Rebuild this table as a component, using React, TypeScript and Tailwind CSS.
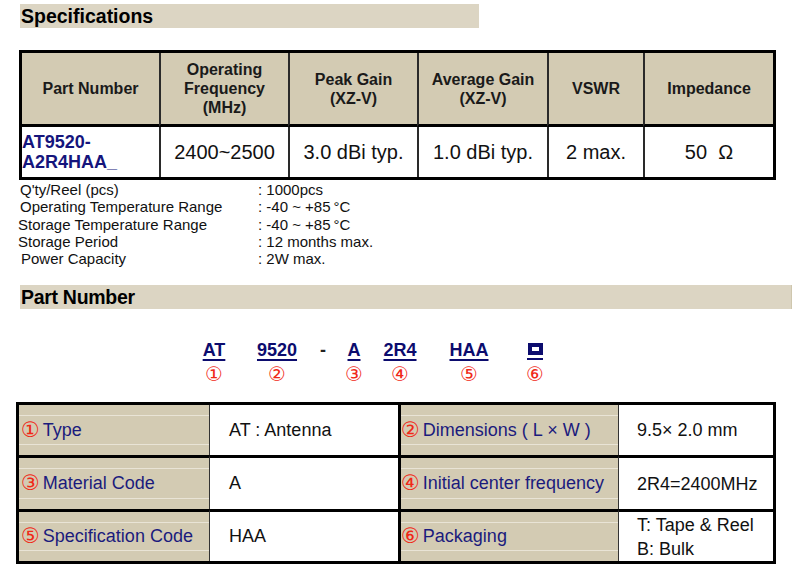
import React from 'react';

const specHeaders = [
  ['Part Number'],
  ['Operating', 'Frequency', '(MHz)'],
  ['Peak Gain', '(XZ-V)'],
  ['Average Gain', '(XZ-V)'],
  ['VSWR'],
  ['Impedance'],
];

const specValues = ['2400~2500', '3.0 dBi typ.', '1.0 dBi typ.', '2 max.', '50\u00a0\u00a0Ω'];

const details = [
  { label: "Q'ty/Reel (pcs)", value: ': 1000pcs', indent: 'pl-[20px]' },
  { label: 'Operating Temperature Range', value: ': -40 ~ +85\u2009°C', indent: 'pl-[20px]' },
  { label: 'Storage Temperature Range', value: ': -40 ~ +85\u2009°C', indent: 'pl-[18px]' },
  { label: 'Storage Period', value: ': 12 months max.', indent: 'pl-[18px]' },
  { label: 'Power Capacity', value: ': 2W max.', indent: 'pl-[21px]' },
];

const codeParts = [
  { code: 'AT', num: '①', left: 'ml-[199px]' },
  { code: '9520', num: '②', left: 'ml-[33px]' },
  { code: '-', num: '', left: 'ml-[16px]' },
  { code: 'A', num: '③', left: 'ml-[1px]' },
  { code: '2R4', num: '④', left: 'ml-[16px]' },
  { code: 'HAA', num: '⑤', left: 'ml-[39px]' },
  { code: 'box', num: '⑥', left: 'ml-[36px]' },
];

const rows = [
  { n1: '①', l1: 'Type', v1: ['AT : Antenna'], n2: '②', l2: 'Dimensions ( L × W )', v2: ['9.5× 2.0 mm'], h: 'h-[50px]' },
  { n1: '③', l1: 'Material Code', v1: ['A'], n2: '④', l2: 'Initial center frequency', v2: ['2R4=2400MHz'], h: 'h-[54px]' },
  { n1: '⑤', l1: 'Specification Code', v1: ['HAA'], n2: '⑥', l2: 'Packaging', v2: ['T: Tape & Reel', 'B: Bulk'], h: 'h-[52px]' },
];

const labelCell =
  'bg-[#d3cbb3] shadow-[inset_0_10px_0_#d3cbb3,inset_0_11px_0_#e9e4d6,inset_0_-10px_0_#d3cbb3,inset_0_-11px_0_#e9e4d6] flex items-center text-[18px] text-[#1b1b7d]';

function Circled({ n, size }: { n: string; size: string }) {
  return (
    <span className={`font-['DejaVu_Sans',sans-serif] text-[#f02818] leading-none ${size}`}>{n}</span>
  );
}

export default function App() {
  return (
    <div className="w-[800px] h-[579px] bg-white font-['Liberation_Sans',Arial,sans-serif] text-[#111] pt-[4px] overflow-hidden">
      {/* Specifications */}
      <div className="ml-[20px] w-[459px] h-[24px] bg-[#dcd5c3] text-[19.5px] font-bold leading-[24px] pl-[1px] text-black">
        Specifications
      </div>

      <div className="ml-[19px] mt-[22px] w-[757px] border-[3px] border-black grid grid-cols-[137px_129px_129px_130px_96px_130px]">
        {specHeaders.map((lines, i) => (
          <div
            key={i}
            className={`h-[74px] bg-[#d3cbb3] flex flex-col items-center justify-center text-[16px] leading-[19px] font-bold text-[#1a1a1a] border-b-[3px] border-black ${
              i > 0 ? 'border-l-2 border-l-[#2a2a2a]' : ''
            }`}
          >
            {lines.map((l) => (
              <span key={l}>{l}</span>
            ))}
          </div>
        ))}
        <div className="h-[50px] flex flex-col justify-center text-[18px] leading-[20px] font-bold text-[#15157c]">
          <span>AT9520-</span>
          <span>A2R4HAA_</span>
        </div>
        {specValues.map((v) => (
          <div key={v} className="h-[50px] border-l-2 border-l-[#2a2a2a] flex items-center justify-center text-[20px] text-[#111]">
            {v}
          </div>
        ))}
      </div>

      <div className="mt-[1px] text-[15px] leading-[17.3px] text-[#111]">
        {details.map((d) => (
          <div key={d.label} className="flex">
            <span className={`w-[258px] ${d.indent}`}>{d.label}</span>
            <span>{d.value}</span>
          </div>
        ))}
      </div>

      {/* Part Number */}
      <div className="ml-[20px] mt-[18px] w-[772px] h-[24px] bg-[#dcd5c3] border-r border-[#cfc7ae] text-[19.5px] font-bold leading-[24px] pl-[1px] tracking-[-0.3px] text-black">
        Part Number
      </div>

      <div className="mt-[31px] flex">
        {codeParts.map((p) => (
          <div key={p.code} className={`w-[30px] flex flex-col items-center ${p.left}`}>
            {p.code === 'box' ? (
              <div className="h-[20px] flex flex-col items-center pt-[3px]">
                <div className="w-[15px] h-[12px] border-[4px] border-[#0c0c6e] bg-white" />
                <div className="w-[16px] h-[2px] bg-[#0c0c6e] mt-[3px]" />
              </div>
            ) : p.code === '-' ? (
              <span className="h-[20px] text-[18px] leading-[20px] font-bold text-[#222]">-</span>
            ) : (
              <span className="h-[20px] whitespace-nowrap text-[18px] leading-[20px] font-bold text-[#0c0c6e] underline decoration-2 underline-offset-[3px]">
                {p.code}
              </span>
            )}
            <span className="mt-[6px] h-[16px] flex items-center">
              {p.num && <Circled n={p.num} size="text-[20px]" />}
            </span>
          </div>
        ))}
      </div>

      <div className="ml-[16px] mt-[20px] w-[760px] border-[3px] border-black grid grid-cols-[190px_189px_220px_155px]">
        {rows.map((r, i) => (
          <React.Fragment key={r.l1}>
            <div className={`${r.h} ${labelCell} pl-[2px] gap-[3px] ${i > 0 ? 'border-t-[3px] border-black' : ''}`}>
              <Circled n={r.n1} size="text-[21px]" />
              <span>{r.l1}</span>
            </div>
            <div className={`${r.h} border-l border-l-[#333] flex items-center pl-[19px] text-[18px] text-[#111] ${i > 0 ? 'border-t-[3px] border-t-black' : ''}`}>
              {r.v1[0]}
            </div>
            <div className={`${r.h} ${labelCell} border-l-[3px] border-l-black pl-[0px] gap-[3px] ${i > 0 ? 'border-t-[3px] border-t-black' : ''}`}>
              <Circled n={r.n2} size="text-[21px]" />
              <span>{r.l2}</span>
            </div>
            <div
              className={`${r.h} border-l border-l-[#333] flex flex-col justify-center pl-[18px] text-[18px] leading-[24px] text-[#111] ${
                i > 0 ? 'border-t-[3px] border-t-black' : ''
              }`}
            >
              {r.v2.map((v) => (
                <span key={v}>{v}</span>
              ))}
            </div>
          </React.Fragment>
        ))}
      </div>
    </div>
  );
}
